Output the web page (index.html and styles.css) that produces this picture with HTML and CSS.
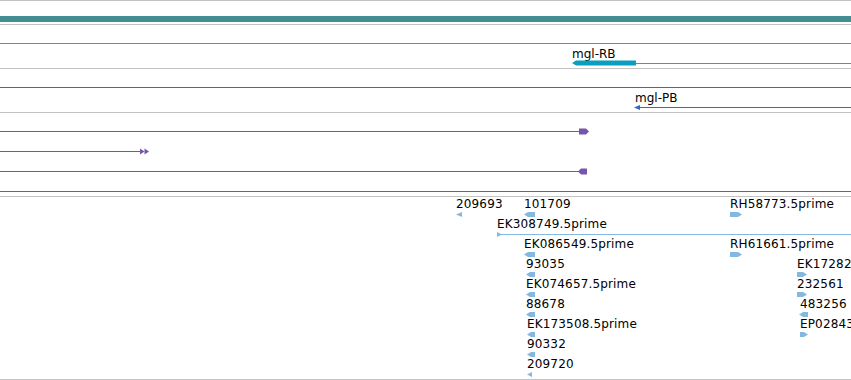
FILE: index.html
```html
<!DOCTYPE html>
<html lang="en">
<head>
  <meta charset="UTF-8">
  <meta name="viewport" content="width=device-width, initial-scale=1.0">
  <title>Tracks</title>
  <link rel="stylesheet" href="styles.css">
</head>
<body>
  <div class="view">

    <div class="header">
      <div class="ruler-bar"></div>
    </div>

    <!-- transcripts -->
    <div class="track t-short">
      <div class="hline teal" style="top:18px;left:0;width:851px"></div>
      <span class="label" style="left:572px;top:22px">mgl-RB</span>
      <svg class="glyph" style="left:572px;top:35px" width="64" height="6" viewBox="0 0 64 6">
        <polygon points="0,3 4,0.5 64,0.5 64,5.5 4,5.5" fill="#0a9fbe"/>
      </svg>
      <div class="hline teal" style="top:38px;left:636px;width:215px"></div>
    </div>

    <div class="track t-short">
      <div class="hline blue" style="top:18px;left:0;width:851px"></div>
      <span class="label" style="left:635px;top:22px">mgl-PB</span>
      <svg class="glyph" style="left:634px;top:36px" width="6" height="5" viewBox="0 0 6 5">
        <polygon points="0,2.5 6,0 6,5" fill="#3566c2"/>
      </svg>
      <div class="hline blue" style="top:38px;left:639px;width:212px"></div>
    </div>

    <!-- alignments -->
    <div class="track t-mid">
      <div class="hline purple" style="top:18px;left:0;width:580px"></div>
      <svg class="glyph" style="left:579px;top:15px" width="10" height="7" viewBox="0 0 10 7">
        <polygon points="0,0.5 7,0.5 10,3.5 7,6.5 0,6.5" fill="#7456aa"/>
      </svg>

      <div class="hline purple" style="top:38px;left:0;width:141px"></div>
      <svg class="glyph" style="left:140px;top:35px" width="9" height="7" viewBox="0 0 9 7">
        <polygon points="0,0.5 4.5,3.5 0,6.5" fill="#7456aa"/>
        <polygon points="4.5,0.5 9,3.5 4.5,6.5" fill="#7456aa"/>
      </svg>

      <div class="hline purple" style="top:58px;left:0;width:579px"></div>
      <svg class="glyph" style="left:578px;top:55px" width="9" height="7" viewBox="0 0 9 7">
        <polygon points="0,3.5 3,0.5 9,0.5 9,6.5 3,6.5" fill="#7456aa"/>
      </svg>

      <div class="hline purple" style="top:78px;left:0;width:851px"></div>
    </div>

    <!-- ESTs -->
    <div class="track t-tall">
      <div class="feat" style="left:456px;top:0">
        <span class="name">209693</span>
        <svg width="6" height="5" viewBox="0 0 6 5"><polygon points="0,2.5 6,0 6,5"/></svg>
      </div>
      <div class="feat" style="left:524px;top:0">
        <span class="name">101709</span>
        <svg width="11" height="5" viewBox="0 0 11 5"><polygon points="0,2.5 4,0 11,0 11,5 4,5"/></svg>
      </div>
      <div class="feat" style="left:730px;top:0">
        <span class="name">RH58773.5prime</span>
        <svg width="12" height="5" viewBox="0 0 12 5"><polygon points="0,0 8,0 12,2.5 8,5 0,5"/></svg>
      </div>

      <div class="feat" style="left:497px;top:20px">
        <span class="name">EK308749.5prime</span>
        <svg width="5" height="5" viewBox="0 0 5 5"><polygon points="0,0 5,2.5 0,5"/></svg>
      </div>
      <div class="hline est" style="top:37px;left:497px;width:354px"></div>

      <div class="feat" style="left:524px;top:40px">
        <span class="name">EK086549.5prime</span>
        <svg width="11" height="5" viewBox="0 0 11 5"><polygon points="0,2.5 4,0 11,0 11,5 4,5"/></svg>
      </div>
      <div class="feat" style="left:730px;top:40px">
        <span class="name">RH61661.5prime</span>
        <svg width="12" height="5" viewBox="0 0 12 5"><polygon points="0,0 8,0 12,2.5 8,5 0,5"/></svg>
      </div>

      <div class="feat" style="left:526px;top:60px">
        <span class="name">93035</span>
        <svg width="9" height="5" viewBox="0 0 9 5"><polygon points="0,2.5 4,0 9,0 9,5 4,5"/></svg>
      </div>
      <div class="feat" style="left:797px;top:60px">
        <span class="name">EK172826.5prime</span>
        <svg width="10" height="5" viewBox="0 0 10 5"><polygon points="0,0 6,0 10,2.5 6,5 0,5"/></svg>
      </div>

      <div class="feat" style="left:526px;top:80px">
        <span class="name">EK074657.5prime</span>
        <svg width="9" height="5" viewBox="0 0 9 5"><polygon points="0,2.5 4,0 9,0 9,5 4,5"/></svg>
      </div>
      <div class="feat" style="left:797px;top:80px">
        <span class="name">232561</span>
        <svg width="10" height="5" viewBox="0 0 10 5"><polygon points="0,0 6,0 10,2.5 6,5 0,5"/></svg>
      </div>

      <div class="feat" style="left:526px;top:100px">
        <span class="name">88678</span>
        <svg width="9" height="5" viewBox="0 0 9 5"><polygon points="0,2.5 4,0 9,0 9,5 4,5"/></svg>
      </div>
      <div class="feat" style="left:799px;top:100px">
        <span class="name pad1">483256</span>
        <svg width="9" height="5" viewBox="0 0 9 5"><polygon points="0,2.5 4,0 9,0 9,5 4,5"/></svg>
      </div>

      <div class="feat" style="left:527px;top:120px">
        <span class="name">EK173508.5prime</span>
        <svg width="8" height="5" viewBox="0 0 8 5"><polygon points="0,2.5 4,0 8,0 8,5 4,5"/></svg>
      </div>
      <div class="feat" style="left:800px;top:120px">
        <span class="name">EP028431.5prime</span>
        <svg width="8" height="5" viewBox="0 0 8 5"><polygon points="0,0 4,0 8,2.5 4,5 0,5"/></svg>
      </div>

      <div class="feat" style="left:527px;top:140px">
        <span class="name">90332</span>
        <svg width="8" height="5" viewBox="0 0 8 5"><polygon points="0,2.5 4,0 8,0 8,5 4,5"/></svg>
      </div>

      <div class="feat" style="left:527px;top:160px">
        <span class="name">209720</span>
        <svg width="5" height="5" viewBox="0 0 5 5"><polygon points="0,2.5 5,0 5,5"/></svg>
      </div>
    </div>

  </div>
</body>
</html>
```

FILE: styles.css
```css
*{
  margin:0;
  padding:0;
  box-sizing: content-box;
}
html, body{
  background: #fff;
  overflow: hidden;
}
.view{
  width: 851px;
  height: 380px;
  overflow: hidden;
  font-family: "DejaVu Sans", sans-serif;
  font-size: 12px;
  color: #000;
}

.header{
  border-top: 1px solid #c3c3c3;
  border-bottom: 1px solid #c3c3c3;
  padding-top: 15px;
  height: 8px;
}
.ruler-bar{
  height: 6px;
  background-color: #428e92;
}

.track{
  position: relative;
  border-bottom: 1px solid #c3c3c3;
  &.t-short{ height: 43px; }
  &.t-mid{ height: 83px; }
  &.t-tall{ height: 182px; }
}

.hline{
  position: absolute;
  height: 1px;
  &.teal{ background-color: #3b9db3; }
  &.blue{ background-color: #3a68bd; }
  &.purple{ background-color: #7456aa; }
  &.est{ background-color: #84b8de; }
}
.glyph{
  position: absolute;
  display: block;
}
.label{
  position: absolute;
  line-height: 14px;
  white-space: nowrap;
}

.feat{
  position: absolute;
  display: flex;
  flex-direction: column;
  align-items: flex-start;
  .name{
    display: block;
    line-height: 14px;
    white-space: nowrap;
    letter-spacing: 0.15px;
    &.pad1{ padding-left: 1px; }
  }
  svg{
    display: block;
    margin-top: 1px;
    fill: #84b8de;
  }
}
```
